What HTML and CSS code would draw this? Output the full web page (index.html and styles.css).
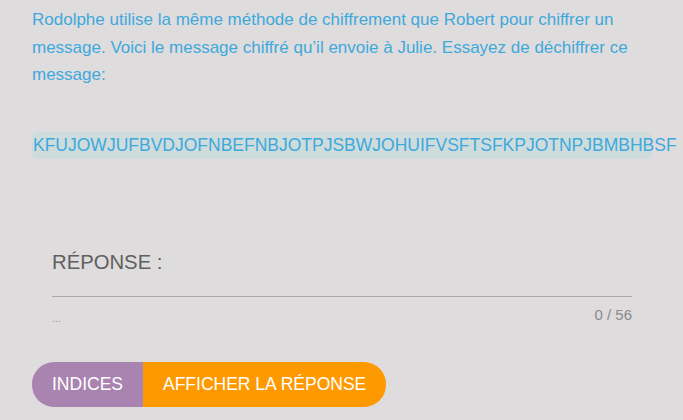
FILE: index.html
```html
<!DOCTYPE html>
<html lang="fr">
<head>
<meta charset="utf-8">
<link rel="stylesheet" href="styles.css">
</head>
<body>
<div class="page">
  <p class="statement">Rodolphe utilise la même méthode de chiffrement que Robert pour chiffrer un message. Voici le message chiffré qu’il envoie à Julie. Essayez de déchiffrer ce message:</p>
  <div class="cipher">KFUJOWJUFBVDJOFNBEFNBJOTPJSBWJOHUIFVSFTSFKPJOTNPJBMBHBSF</div>
  <div class="answer">
    <label class="answer-label">RÉPONSE :</label>
    <div class="answer-field"></div>
    <div class="answer-meta">
      <span class="hint">...</span>
      <span class="count">0 / 56</span>
    </div>
  </div>
  <div class="actions">
    <button class="btn btn-hints">INDICES</button>
    <button class="btn btn-show">AFFICHER LA RÉPONSE</button>
  </div>
</div>
</body>
</html>
```
FILE: styles.css
```css
html, body {
  margin: 0;
  padding: 0;
  background: #dedcdc;
  font-family: "Liberation Sans", Arial, sans-serif;
}
.page {
  width: 620px;
  padding: 6px 31px 0 32px;
}
.statement {
  margin: 0;
  font-size: 17px;
  line-height: 27.5px;
  color: #3ea9dc;
}
.cipher {
  margin-top: 43px;
  height: 27px;
  line-height: 27px;
  font-size: 17.5px;
  color: #3ea9dc;
  background: #cfdcdc;
  border-radius: 6px;
  white-space: nowrap;
  padding-left: 1px;
}
.answer {
  padding: 0 20px;
  margin-top: 91px;
}
.answer-label {
  display: block;
  font-size: 20.3px;
  line-height: 24px;
  color: #5f5f5f;
}
.answer-field {
  margin-top: 21px;
  height: 1px;
  border-bottom: 1px solid #a8a8a8;
}
.answer-meta {
  display: flex;
  justify-content: space-between;
  align-items: flex-end;
  margin-top: 9px;
  font-size: 15px;
  line-height: 18px;
  color: #8a8a8a;
}
.hint {
  font-size: 11px;
  line-height: 12px;
  color: #9a9a9a;
}
.actions {
  display: flex;
  margin-top: 38px;
}
.btn {
  border: none;
  height: 45px;
  padding: 0 20px;
  font-family: "Liberation Sans", Arial, sans-serif;
  font-size: 17.5px;
  color: #ffffff;
  cursor: pointer;
}
.btn-hints {
  background: #a984b0;
  border-radius: 22px 0 0 22px;
}
.btn-show {
  background: #ff9900;
  border-radius: 0 22px 22px 0;
}
```
